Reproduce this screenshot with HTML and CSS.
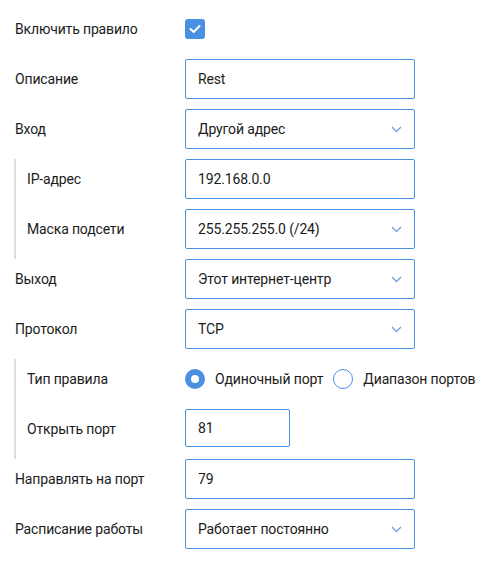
FILE: index.html
```html
<!DOCTYPE html>
<html lang="ru">
<head>
<meta charset="utf-8">
<title>Правило</title>
<link rel="stylesheet" href="styles.css">
</head>
<body>
<form class="form">
  <div class="row">
    <div class="label">Включить правило</div>
    <span class="checkbox"><svg width="12" height="10" viewBox="0 0 12 10"><polyline points="1.5,5 4.7,8 10.5,2" fill="none" stroke="#fff" stroke-width="2" stroke-linecap="round" stroke-linejoin="round"/></svg></span>
  </div>
  <div class="row">
    <div class="label">Описание</div>
    <div class="field">Rest</div>
  </div>
  <div class="row">
    <div class="label">Вход</div>
    <div class="field select">Другой адрес<svg class="chev" width="11" height="7" viewBox="0 0 11 7"><polyline points="1,1 5.5,5.5 10,1" fill="none" stroke="#7d9fdc" stroke-width="1.4"/></svg></div>
  </div>
  <div class="group">
    <div class="row">
      <div class="label">IP-адрес</div>
      <div class="field">192.168.0.0</div>
    </div>
    <div class="row">
      <div class="label">Маска подсети</div>
      <div class="field select">255.255.255.0 (/24)<svg class="chev" width="11" height="7" viewBox="0 0 11 7"><polyline points="1,1 5.5,5.5 10,1" fill="none" stroke="#7d9fdc" stroke-width="1.4"/></svg></div>
    </div>
  </div>
  <div class="row">
    <div class="label">Выход</div>
    <div class="field select">Этот интернет-центр<svg class="chev" width="11" height="7" viewBox="0 0 11 7"><polyline points="1,1 5.5,5.5 10,1" fill="none" stroke="#7d9fdc" stroke-width="1.4"/></svg></div>
  </div>
  <div class="row">
    <div class="label">Протокол</div>
    <div class="field select">TCP<svg class="chev" width="11" height="7" viewBox="0 0 11 7"><polyline points="1,1 5.5,5.5 10,1" fill="none" stroke="#7d9fdc" stroke-width="1.4"/></svg></div>
  </div>
  <div class="group">
    <div class="row">
      <div class="label">Тип правила</div>
      <div class="radios">
        <span class="radio checked"></span><span class="radio-text">Одиночный порт</span>
        <span class="radio"></span><span class="radio-text">Диапазон портов</span>
      </div>
    </div>
    <div class="row">
      <div class="label">Открыть порт</div>
      <div class="field short">81</div>
    </div>
  </div>
  <div class="row">
    <div class="label">Направлять на порт</div>
    <div class="field">79</div>
  </div>
  <div class="row">
    <div class="label">Расписание работы</div>
    <div class="field select">Работает постоянно<svg class="chev" width="11" height="7" viewBox="0 0 11 7"><polyline points="1,1 5.5,5.5 10,1" fill="none" stroke="#7d9fdc" stroke-width="1.4"/></svg></div>
  </div>
</form>
</body>
</html>
```

FILE: styles.css
```css
html, body {
  margin: 0;
  padding: 0;
  background: #fff;
}
body {
  font-family: Roboto, "Liberation Sans", Arial, sans-serif;
  font-size: 14px;
  letter-spacing: -0.15px;
  color: #1b1b1b;
}
.form {
  display: flex;
  flex-direction: column;
  padding: 9px 0 0 15px;
}
.row {
  display: flex;
  align-items: center;
  height: 40px;
  margin-bottom: 10px;
}
.label {
  width: 170px;
  flex: none;
}
.group {
  display: flex;
  flex-direction: column;
  margin-left: -1px;
  border-left: 2px solid #dcdfe8;
  padding-left: 11px;
}
.group .label {
  width: 158px;
}
.checkbox {
  width: 20px;
  height: 20px;
  border-radius: 3px;
  background: #4a90e2;
  display: flex;
  align-items: center;
  justify-content: center;
}
.field {
  box-sizing: border-box;
  width: 230px;
  height: 40px;
  border: 1px solid #4a90e2;
  border-radius: 2px;
  padding: 0 12px 0 12px;
  display: flex;
  align-items: center;
  justify-content: space-between;
}
.field.short {
  width: 105px;
  height: 38px;
  align-self: flex-start;
}
.chev {
  flex: none;
}
.radios {
  display: flex;
  align-items: center;
  white-space: nowrap;
}
.radio {
  box-sizing: border-box;
  width: 20px;
  height: 20px;
  border-radius: 50%;
  border: 1.5px solid #4a90e2;
  flex: none;
  margin-right: 10px;
}
.radio.checked {
  border: 6px solid #4a90e2;
  background: #fff;
}
.radio-text {
  margin-right: 10px;
}
```
